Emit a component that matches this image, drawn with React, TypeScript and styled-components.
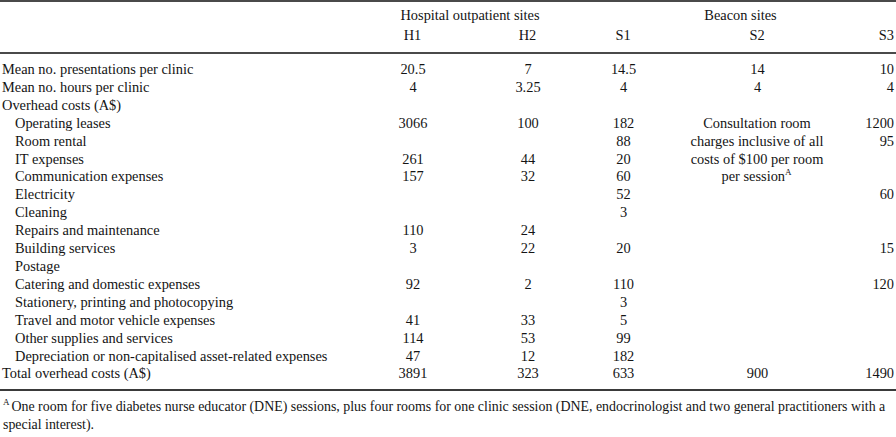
import React from "react";
import styled, { createGlobalStyle } from "styled-components";

const Global = createGlobalStyle`
  html, body { margin: 0; padding: 0; background: #ffffff; }
  body { font-family: "Liberation Serif", "Times New Roman", serif; color: #141414; }
`;

const Page = styled.div`
  width: 896px;
  box-sizing: border-box;
  font-size: 14.4px;
`;

const Table = styled.table`
  width: 100%;
  border-collapse: collapse;
  table-layout: fixed;
  border-top: 2px solid #4a4a4a;
  border-bottom: 2px solid #3a3a3a;
`;

const Col = styled.col<{ $w: number }>`
  width: ${(p) => p.$w}px;
`;

const HeadCell = styled.th<{ $align?: string }>`
  font-weight: normal;
  text-align: ${(p) => p.$align ?? "center"};
  height: 20px;
  padding: 0 ${(p) => (p.$align === "right" ? "2px" : "0")} 0 0;
  line-height: 20px;
  white-space: nowrap;
`;

const HeadRow = styled.tr<{ $last?: boolean }>`
  border-bottom: ${(p) => (p.$last ? "2px solid #4a4a4a" : "none")};
  th {
    padding-top: ${(p) => (p.$last ? "0" : "3px")};
    padding-bottom: ${(p) => (p.$last ? "7px" : "0")};
  }
`;

const BodyRow = styled.tr<{ $first?: boolean; $last?: boolean }>`
  td {
    padding-top: ${(p) => (p.$first ? "7px" : "0")};
    padding-bottom: ${(p) => (p.$last ? "6px" : "0")};
  }
`;

const Label = styled.td<{ $indent?: boolean }>`
  text-align: left;
  line-height: 17.9px;
  padding-left: ${(p) => (p.$indent ? "15px" : "2px")} !important;
  white-space: nowrap;
`;

const Value = styled.td<{ $align?: string }>`
  text-align: ${(p) => p.$align ?? "center"};
  line-height: 17.9px;
  padding-right: ${(p) => (p.$align === "right" ? "2px" : "0")} !important;
  white-space: nowrap;
`;

const Note = styled.td`
  text-align: center;
  vertical-align: top;
  line-height: 17.9px;
`;

const Sup = styled.span<{ $gap?: number }>`
  display: inline-block;
  font-size: 9px;
  line-height: 9px;
  vertical-align: top;
  margin-right: ${(p) => p.$gap ?? 1}px;
`;

const Footnote = styled.p`
  margin: 7px 0 0 0;
  padding: 0 0 0 3px;
  font-size: 13.9px;
  line-height: 18px;
`;

type Row = { label: string; indent?: boolean; v: (string | null)[] };

const rows: Row[] = [
  { label: "Mean no. presentations per clinic", v: ["20.5", "7", "14.5", "14", "10"] },
  { label: "Mean no. hours per clinic", v: ["4", "3.25", "4", "4", "4"] },
  { label: "Overhead costs (A$)", v: ["", "", "", "", ""] },
  { label: "Operating leases", indent: true, v: ["3066", "100", "182", null, "1200"] },
  { label: "Room rental", indent: true, v: ["", "", "88", null, "95"] },
  { label: "IT expenses", indent: true, v: ["261", "44", "20", null, ""] },
  { label: "Communication expenses", indent: true, v: ["157", "32", "60", null, ""] },
  { label: "Electricity", indent: true, v: ["", "", "52", "", "60"] },
  { label: "Cleaning", indent: true, v: ["", "", "3", "", ""] },
  { label: "Repairs and maintenance", indent: true, v: ["110", "24", "", "", ""] },
  { label: "Building services", indent: true, v: ["3", "22", "20", "", "15"] },
  { label: "Postage", indent: true, v: ["", "", "", "", ""] },
  { label: "Catering and domestic expenses", indent: true, v: ["92", "2", "110", "", "120"] },
  { label: "Stationery, printing and photocopying", indent: true, v: ["", "", "3", "", ""] },
  { label: "Travel and motor vehicle expenses", indent: true, v: ["41", "33", "5", "", ""] },
  { label: "Other supplies and services", indent: true, v: ["114", "53", "99", "", ""] },
  { label: "Depreciation or non-capitalised asset-related expenses", indent: true, v: ["47", "12", "182", "", ""] },
  { label: "Total overhead costs (A$)", v: ["3891", "323", "633", "900", "1490"] },
];

export default function App() {
  return (
    <Page>
      <Global />
      <Table>
        <colgroup>
          <Col $w={355} />
          <Col $w={115} />
          <Col $w={115} />
          <Col $w={76} />
          <Col $w={192} />
          <Col $w={43} />
        </colgroup>
        <thead>
          <HeadRow>
            <HeadCell />
            <HeadCell colSpan={2}>Hospital outpatient sites</HeadCell>
            <HeadCell colSpan={3}>Beacon sites</HeadCell>
          </HeadRow>
          <HeadRow $last>
            <HeadCell />
            <HeadCell>H1</HeadCell>
            <HeadCell>H2</HeadCell>
            <HeadCell>S1</HeadCell>
            <HeadCell>S2</HeadCell>
            <HeadCell $align="right">S3</HeadCell>
          </HeadRow>
        </thead>
        <tbody>
          {rows.map((r, i) => (
            <BodyRow key={r.label} $first={i === 0} $last={i === rows.length - 1}>
              <Label $indent={r.indent}>{r.label}</Label>
              {r.v.map((val, j) => {
                if (val === null) {
                  if (i === 3) {
                    return (
                      <Note key={j} rowSpan={4}>
                        Consultation room
                        <br />
                        charges inclusive of all
                        <br />
                        costs of $100 per room
                        <br />
                        per session<Sup>A</Sup>
                      </Note>
                    );
                  }
                  return null;
                }
                return (
                  <Value key={j} $align={j === 4 ? "right" : undefined}>
                    {val}
                  </Value>
                );
              })}
            </BodyRow>
          ))}
        </tbody>
      </Table>
      <Footnote>
        <Sup $gap={2}>A</Sup>One room for five diabetes nurse educator (DNE) sessions, plus four rooms for one clinic session (DNE,
        endocrinologist and two general practitioners with a special interest).
      </Footnote>
    </Page>
  );
}
